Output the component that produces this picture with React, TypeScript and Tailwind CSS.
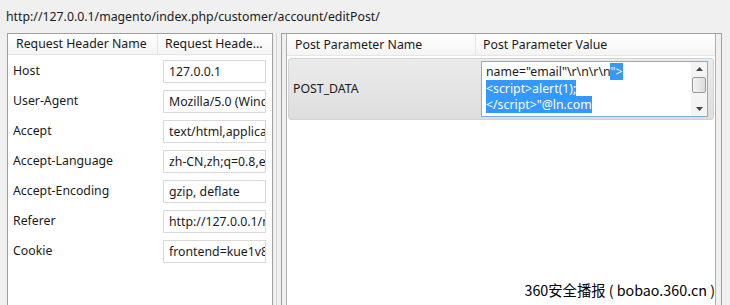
import React from 'react'

const headers: [string, string][] = [
    ['Host', '127.0.0.1'],
    ['User-Agent', 'Mozilla/5.0 (Windows NT 6.1)'],
    ['Accept', 'text/html,application/xhtml+xml'],
    ['Accept-Language', 'zh-CN,zh;q=0.8,en-US'],
    ['Accept-Encoding', 'gzip, deflate'],
    ['Referer', 'http://127.0.0.1/magento'],
    ['Cookie', 'frontend=kue1v8s7'],
]

const font = { fontFamily: '"Noto Sans", "Noto Sans CJK SC", sans-serif' }

function ScrollBar() {
    return (
        <div className="w-[16px] h-full flex flex-col items-center bg-[#f4f4f4]">
            <div className="h-[14px] flex items-center justify-center">
                <svg width="7" height="4" viewBox="0 0 7 4"><path d="M3.5 0L7 4H0z" fill="#444" /></svg>
            </div>
            <div className="w-[14px] h-[16px] mt-[1px] rounded-[2px] border border-[#9a9a9a] bg-gradient-to-r from-[#f4f4f4] to-[#dcdcdc]" />
            <div className="flex-1" />
            <div className="h-[14px] flex items-center justify-center">
                <svg width="7" height="4" viewBox="0 0 7 4"><path d="M0 0H7L3.5 4z" fill="#444" /></svg>
            </div>
        </div>
    )
}

export default function App() {
    return (
        <div className="w-[730px] h-[305px] bg-[#f0f0f0] text-[12.3px] text-[#1a1a1a] overflow-hidden relative" style={font}>
            <div className="h-[33px] pl-[6px] pt-[8px] leading-[18px]">
                http://127.0.0.1/magento/index.php/customer/account/editPost/
            </div>

            <div className="flex h-[272px]">
                {/* left: request headers */}
                <div className="ml-[7px] w-[266px] h-full border-l border-t border-r border-[#a0a0a0] bg-white flex flex-col">
                    <div className="flex h-[21px] border-b border-[#e5e5e5] bg-gradient-to-b from-white to-[#f4f4f4] leading-[20px]">
                        <div className="w-[150px] pl-[8px] border-r border-[#e5e5e5]">Request Header Name</div>
                        <div className="flex-1 pl-[7px] whitespace-nowrap overflow-hidden">Request Heade...</div>
                    </div>
                    <div className="pt-[1px]">
                        {headers.map(([k, v]) => (
                            <div key={k} className="flex items-center h-[30px]">
                                <div className="w-[155px] pl-[5px]">{k}</div>
                                <div className="w-[103px] h-[23px] border border-[#d9d9d9] pl-[5px] leading-[21px] overflow-hidden whitespace-nowrap">{v}</div>
                            </div>
                        ))}
                    </div>
                </div>

                {/* splitter */}
                <div className="w-[8px] flex">
                    <div className="w-[3px]" />
                    <div className="w-[1px] bg-[#d6d6d6]" />
                </div>

                {/* right: post params */}
                <div className="w-[441px] h-full border-l border-t border-r border-[#a0a0a0] pl-[4px] pr-[5px]">
                    <div className="h-full border-l border-r border-[#b0b0b0] bg-white flex flex-col">
                        <div className="flex h-[22px] border-b border-[#e5e5e5] bg-gradient-to-b from-white to-[#f4f4f4] leading-[21px]">
                            <div className="w-[189px] pl-[8px] border-r border-[#e5e5e5]">Post Parameter Name</div>
                            <div className="flex-1 pl-[7px]">Post Parameter Value</div>
                        </div>
                        <div className="mt-[2px] ml-[1px] mr-[1px] h-[62px] rounded-[3px] border border-[#d2d2d2] bg-gradient-to-b from-[#ebebeb] to-[#dedede] flex items-center">
                            <div className="w-[192px] pl-[4px]">POST_DATA</div>
                            <div className="w-[227px] h-[56px] border border-[#7ab0e0] bg-white flex">
                                <div className="flex-1 pl-[4px] pt-[2px] leading-[16.5px] whitespace-nowrap">
                                    <div>name="email"\r\n\r\n<span className="bg-[#3399ff] text-white">"&gt;</span></div>
                                    <div><span className="bg-[#3399ff] text-white">&lt;script&gt;alert(1);</span></div>
                                    <div><span className="bg-[#3399ff] text-white">&lt;/script&gt;"@ln.com</span></div>
                                </div>
                                <ScrollBar />
                            </div>
                        </div>
                    </div>
                </div>
            </div>

            <div
                className="absolute right-[15px] bottom-[5px] text-[14.3px] text-black whitespace-nowrap"
                style={{ fontFamily: '"Noto Sans CJK SC", sans-serif', textShadow: '0 0 2px #fff, 0 0 2px #fff, 0 0 1px #fff' }}
            >
                360安全播报 ( bobao.360.cn )
            </div>
        </div>
    )
}
